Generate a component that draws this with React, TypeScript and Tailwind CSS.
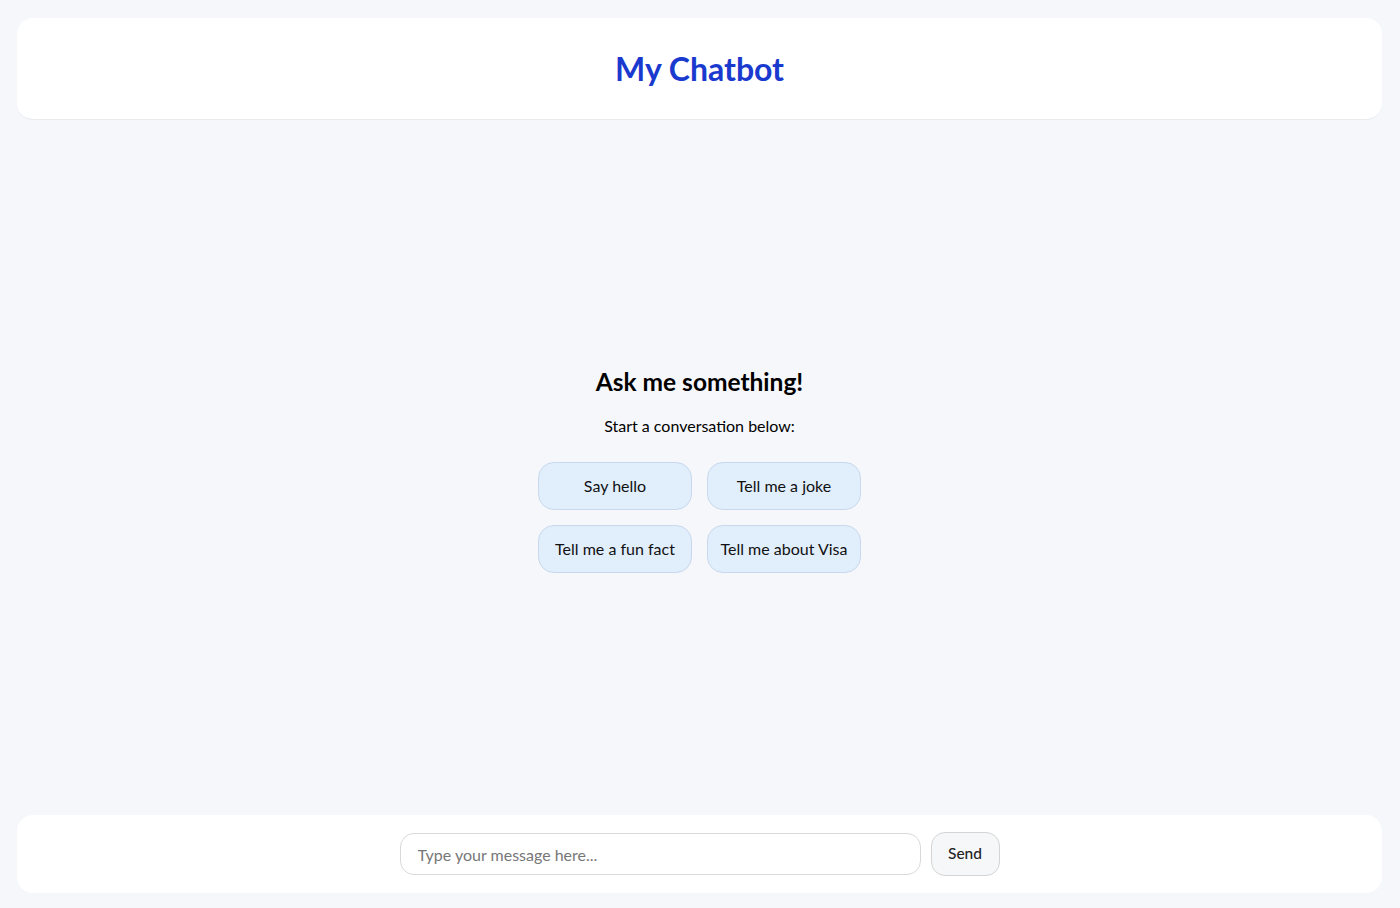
const suggestions = ["Say hello", "Tell me a joke", "Tell me a fun fact", "Tell me about Visa"];

export default function App() {
    return (
        <div className="flex h-screen flex-col bg-[#f5f7fa] pl-[17px] pr-[18px] pt-[18px] pb-[15px] font-['Lato',sans-serif] text-black">
            <header className="flex h-[102px] items-center justify-center rounded-2xl border-b border-[#e8eaee] bg-white">
                <h1 className="text-[32px] font-bold text-[#1a3acf]">My Chatbot</h1>
            </header>

            <main className="flex flex-1 flex-col items-center justify-center pt-[4px]">
                <h2 className="text-[24.5px] font-bold leading-8">Ask me something!</h2>
                <p className="mt-[16px] text-[16px] leading-6">Start a conversation below:</p>
                <div className="mt-[24px] grid grid-cols-2 gap-x-[15px] gap-y-[15px]">
                    {suggestions.map((s) => (
                        <button
                            key={s}
                            className="h-[48px] w-[154px] rounded-2xl border border-[#c9d8ec] bg-[#e1eefc] text-[16px] text-[#111]"
                        >
                            {s}
                        </button>
                    ))}
                </div>
            </main>

            <footer className="flex h-[78px] items-center justify-center gap-[10px] rounded-2xl bg-white">
                <input
                    className="h-[42px] w-[521px] rounded-[14px] border border-[#d9d9d9] px-[17px] text-[16px] placeholder:text-[#777] focus:outline-none"
                    placeholder="Type your message here..."
                />
                <button className="h-[44px] w-[69px] rounded-[14px] border border-[#d4d4d4] bg-[#f6f7f9] text-[15.5px] font-medium text-[#222]">
                    Send
                </button>
            </footer>
        </div>
    );
}
